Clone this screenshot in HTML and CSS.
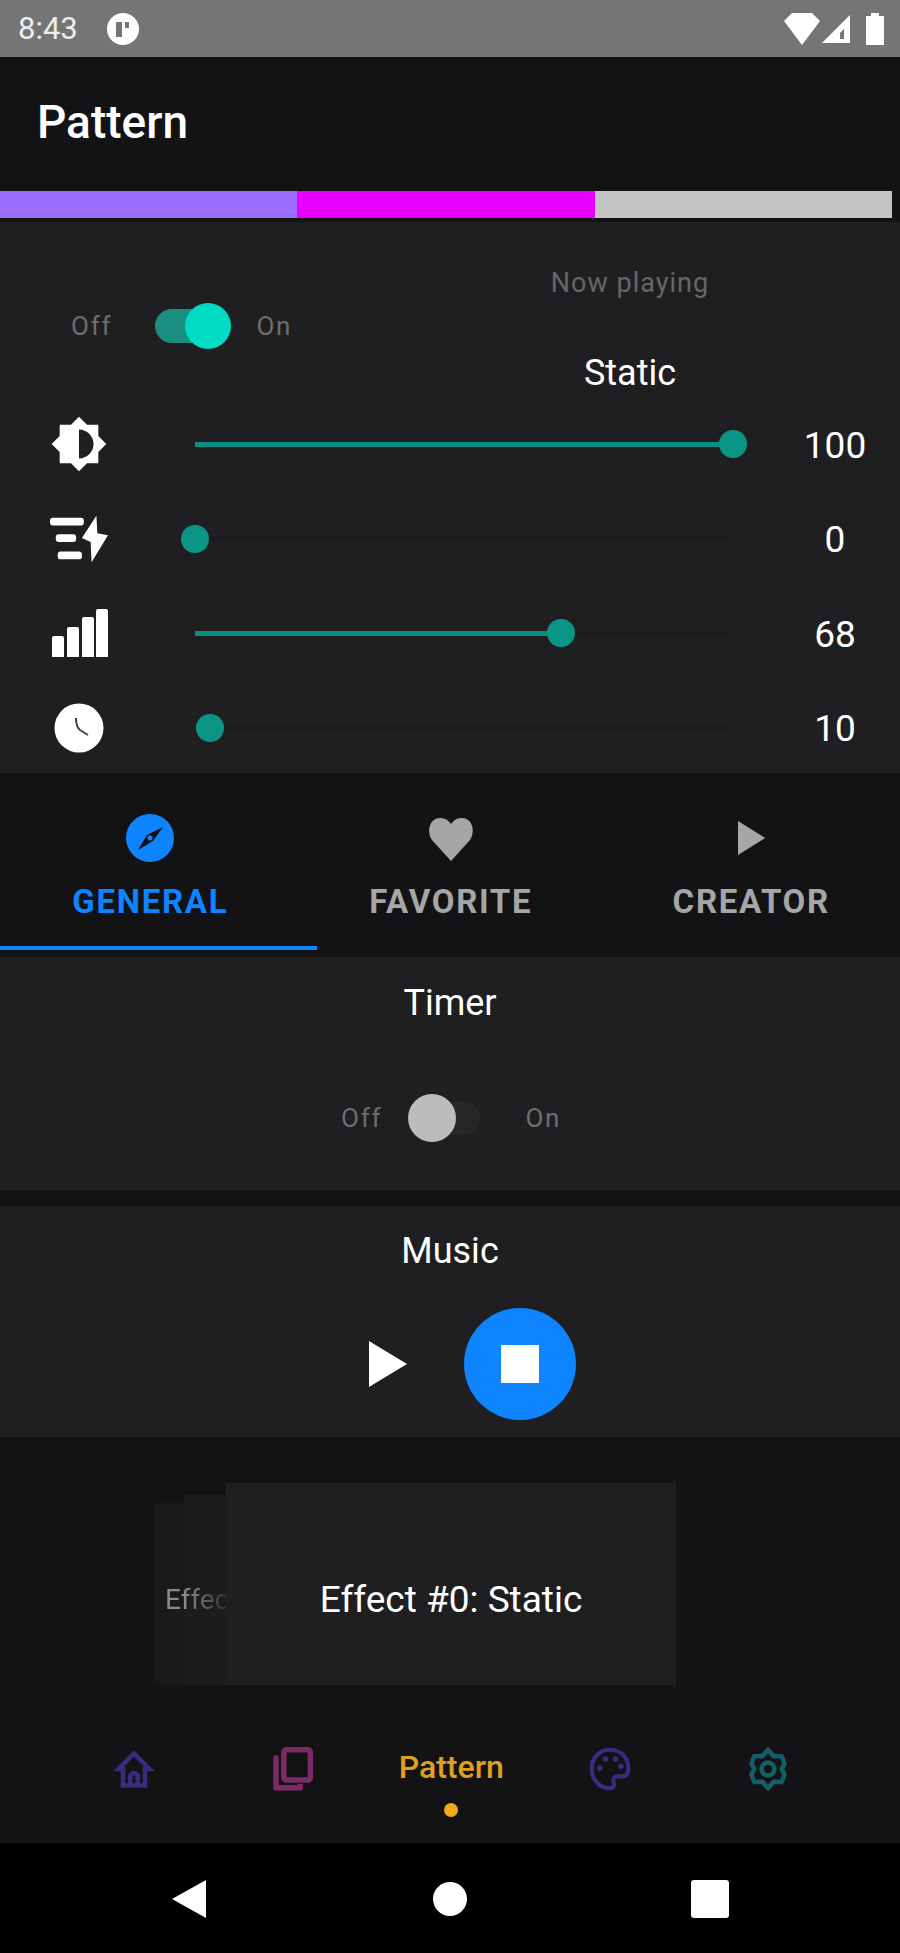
FILE: index.html
```html
<!DOCTYPE html>
<html lang="en">
<head>
  <meta charset="UTF-8">
  <meta name="viewport" content="width=device-width, initial-scale=1.0">
  <title>Pattern</title>
  <link rel="stylesheet" href="styles.css">
</head>
<body>
  <div class="status-bar">
    <span class="status-time">8:43</span>
    <svg class="status-app" viewBox="0 0 34 34"><circle cx="17" cy="17" r="16" fill="#fff"/><path d="M10 10h6v15h-6zM19 10h4v6h-4z" fill="#757575"/></svg>
    <span class="status-space"></span>
    <svg class="status-wifi" viewBox="0 0 36 32"><path d="M0 8 8 0h20l8 8-18 24z" fill="#fff"/></svg>
    <svg class="status-signal" viewBox="0 0 28 28"><path d="M0 28 28 0v28zM18 24h4V14l-4 4z" fill="#fff" fill-rule="evenodd"/></svg>
    <svg class="status-battery" viewBox="0 0 18 32"><path d="M5 0h8v3h5v29H0V3h5z" fill="#fff"/></svg>
  </div>

  <div class="app-bar">
    <h1>Pattern</h1>
  </div>

  <div class="color-bar">
    <div class="color-seg seg-purple"></div>
    <div class="color-seg seg-magenta"></div>
    <div class="color-seg seg-grey"></div>
  </div>

  <div class="panel controls">
    <div class="controls-top">
      <div class="toggle-group main-toggle">
        <span class="toggle-label">Off</span>
        <div class="switch switch-on"><div class="switch-thumb"></div></div>
        <span class="toggle-label">On</span>
      </div>
      <div class="now-playing">
        <div class="now-label">Now playing</div>
        <div class="now-name">Static</div>
      </div>
    </div>

    <div class="slider-row">
      <svg class="row-icon" viewBox="0 0 24 24"><path d="M20 15.31 23.31 12 20 8.69V4h-4.69L12 .69 8.69 4H4v4.69L.69 12 4 15.31V20h4.69L12 23.31 15.31 20H20v-4.69zM12 18V6c3.31 0 6 2.69 6 6s-2.69 6-6 6z" fill="#fff"/></svg>
      <div class="slider">
        <div class="slider-fill" style="width: 100%"></div>
        <div class="slider-thumb" style="left: 100%"></div>
      </div>
      <span class="slider-value">100</span>
    </div>

    <div class="slider-row">
      <svg class="row-icon" viewBox="0 0 60 48"><rect x="0" y="2" width="35" height="8" rx="3" fill="#fff"/><rect x="6" y="19" width="21" height="8" rx="3" fill="#fff"/><rect x="8" y="37" width="25" height="8" rx="3" fill="#fff"/><path d="M48 0 33 23l9 4 1 21 17-28-11-2z" fill="#fff"/></svg>
      <div class="slider">
        <div class="slider-thumb" style="left: 0%"></div>
      </div>
      <span class="slider-value">0</span>
    </div>

    <div class="slider-row">
      <svg class="row-icon" viewBox="0 0 58 48"><path d="M2 29q0-2 2-2h8q2 0 2 2v19H2zM17 20q0-2 2-2h8q2 0 2 2v28H17zM32 10q0-2 2-2h8q2 0 2 2v38H32zM46 2q0-2 2-2h8q2 0 2 2v46H46z" fill="#fff"/></svg>
      <div class="slider">
        <div class="slider-fill" style="width: 68%"></div>
        <div class="slider-thumb" style="left: 68%"></div>
      </div>
      <span class="slider-value">68</span>
    </div>

    <div class="slider-row">
      <svg class="row-icon" viewBox="0 0 58 58"><circle cx="29" cy="29" r="24.500" fill="#fff"/><path d="M26 19q0 9 4 12l8 5" fill="none" stroke="#444" stroke-width="2"/></svg>
      <div class="slider">
        <div class="slider-thumb" style="left: 2.800%"></div>
      </div>
      <span class="slider-value">10</span>
    </div>
  </div>

  <div class="tabs">
    <div class="tab tab-active">
      <svg class="tab-icon" viewBox="0 0 50 50"><circle cx="25" cy="25" r="24" fill="#0f84ff"/><path d="M38 14 28 28 13 37l9-15z" fill="#131316"/><circle cx="25" cy="25" r="2.500" fill="#0f84ff"/></svg>
      <span class="tab-label">GENERAL</span>
    </div>
    <div class="tab">
      <svg class="tab-icon" viewBox="0 0 50 50"><path d="M25 48 6 27C0 18 4 5 14 5c5 0 8 2 11 6 3-4 6-6 11-6 10 0 14 13 8 22z" fill="#a6a6a6"/></svg>
      <span class="tab-label">FAVORITE</span>
    </div>
    <div class="tab">
      <svg class="tab-icon" viewBox="0 0 50 50"><path d="M12 8v34l27-17z" fill="#a6a6a6"/></svg>
      <span class="tab-label">CREATOR</span>
    </div>
  </div>

  <div class="panel timer">
    <div class="panel-title">Timer</div>
    <div class="toggle-group timer-toggle">
      <span class="toggle-label">Off</span>
      <div class="switch switch-off"><div class="switch-thumb"></div></div>
      <span class="toggle-label">On</span>
    </div>
  </div>

  <div class="panel music">
    <div class="panel-title">Music</div>
    <div class="music-buttons">
      <svg class="play-icon" viewBox="0 0 40 48"><path d="M1 1v46l38-23z" fill="#fff"/></svg>
      <div class="stop-button"><div class="stop-square"></div></div>
    </div>
  </div>

  <div class="carousel">
    <div class="card card-back-2"></div>
    <div class="card card-back-1"></div>
    <span class="card-peek">Effec</span>
    <div class="card card-front">Effect #0: Static</div>
  </div>

  <div class="bottom-nav">
    <svg class="nav-icon" viewBox="0 0 44 48"><path d="M5 24 22 7l17 17h-5v18H10V24zM18 42V31q4-5 8 0v11" fill="none" stroke="#3a2a80" stroke-width="5"/></svg>
    <svg class="nav-icon" viewBox="0 0 44 48"><path d="M6 12H3.500v32.500H30V40" fill="none" stroke="#7a2b66" stroke-width="6" stroke-linejoin="round"/><rect x="12" y="3" width="29" height="33" rx="3" fill="none" stroke="#7a2b66" stroke-width="6"/></svg>
    <div class="nav-current">
      <span class="nav-label">Pattern</span>
      <span class="nav-dot"></span>
    </div>
    <svg class="nav-icon" viewBox="0 0 44 48"><path d="M22 3C10 3 2 12 2 24c0 12 9 21 20 21 4 0 5-3 4-6-1-4 0-7 5-7h5c5 0 6-4 6-9C42 11 33 3 22 3z" fill="none" stroke="#3a2a80" stroke-width="4.500"/><circle cx="11" cy="23" r="3" fill="#3a2a80"/><circle cx="17" cy="13" r="3" fill="#3a2a80"/><circle cx="28" cy="13" r="3" fill="#3a2a80"/><circle cx="34" cy="21" r="3" fill="#3a2a80"/></svg>
    <svg class="nav-icon" viewBox="0 0 44 48"><path d="M22 3l6 7 9 0 3 8-3 6 3 6-3 8-9 0-6 7-6-7-9 0-3-8 3-6-3-6 3-8 9 0z" fill="none" stroke="#145f66" stroke-width="5" stroke-linejoin="round"/><circle cx="22" cy="24" r="7" fill="none" stroke="#145f66" stroke-width="5"/></svg>
  </div>

  <div class="system-nav">
    <svg class="sys-back" viewBox="0 0 34 38"><path d="M34 0v38L0 19z" fill="#fff"/></svg>
    <div class="sys-home"></div>
    <div class="sys-recent"></div>
  </div>
</body>
</html>
```

FILE: styles.css
```css
body {
  margin: 0;
  width: 900px;
  height: 1953px;
  overflow: hidden;
  background-color: #131316;
  color: #fff;
  font-family: Roboto, "Liberation Sans", sans-serif;
}

/* status bar */
.status-bar {
  height: 57px;
  padding: 0 16px 0 18px;
  box-sizing: border-box;
  display: flex;
  align-items: center;
  background-color: #757575;
}

.status-time {
  font-size: 31px;
  color: #eee;
  width: 88px;
}

.status-app {
  width: 34px;
  height: 34px;
}

.status-space {
  flex: 1;
}

.status-wifi {
  width: 36px;
  height: 32px;
}

.status-signal {
  width: 28px;
  height: 28px;
  margin-left: 2px;
}

.status-battery {
  width: 18px;
  height: 32px;
  margin-left: 16px;
}

/* title and colours */
.app-bar {
  height: 134px;
  padding-left: 37px;
  display: flex;
  align-items: flex-start;
}

h1 {
  margin: 41px 0 0;
  font-size: 46px;
  line-height: 48px;
  font-weight: 500;
}

.color-bar {
  height: 27px;
  width: 892px;
  display: flex;
}

.color-seg {
  flex: 1;
}

.seg-purple {
  background-color: #996eff;
}

.seg-magenta {
  background-color: #e600ff;
}

.seg-grey {
  background-color: #c4c4c4;
}

.panel {
  background-color: #1f1f22;
}

/* top controls */
.controls {
  margin-top: 4px;
  height: 551px;
  overflow: hidden;
}

.controls-top {
  height: 175px;
  position: relative;
}

.toggle-group {
  display: flex;
  align-items: center;
}

.toggle-label {
  font-size: 26px;
  letter-spacing: 1.800px;
  color: #6e6e6e;
}

.main-toggle {
  padding-top: 87px;
  padding-left: 71px;
}

.switch {
  height: 34px;
  border-radius: 17px;
  position: relative;
}

.switch-thumb {
  border-radius: 50%;
  position: absolute;
}

.switch-on {
  width: 70px;
  margin: 0 31px 0 43px;
  background-color: #1a8f80;
}

.switch-on .switch-thumb {
  right: -6px;
  top: -6px;
  width: 46px;
  height: 46px;
  background-color: #00dcc4;
}

.switch-off {
  width: 68px;
  margin: 0 45px 0 30px;
  background-color: #262628;
}

.switch-off .switch-thumb {
  left: -4px;
  top: -7px;
  width: 48px;
  height: 48px;
  background-color: #bcbcbc;
}

.now-playing {
  position: absolute;
  left: 450px;
  width: 360px;
  top: 40px;
  text-align: center;
}

.now-label {
  font-size: 27px;
  letter-spacing: 1px;
  line-height: 42px;
  color: #666;
}

.now-name {
  margin-top: 47px;
  font-size: 36px;
  line-height: 44px;
}

/* sliders */
.slider-row {
  height: 94.5px;
  display: grid;
  grid-template-columns: 50px 58px 87px 538px 1fr;
  align-items: center;
}

.row-icon {
  grid-column: 2;
  width: 58px;
  height: 58px;
}

.slider {
  grid-column: 4;
  height: 5px;
  position: relative;
  background-color: #1c1c1e;
}

.slider-fill {
  height: 100%;
  background-color: #0a8f80;
}

.slider-thumb {
  width: 28px;
  height: 28px;
  margin-left: -14px;
  margin-top: -14px;
  border-radius: 50%;
  position: absolute;
  top: 50%;
  background-color: #0a9585;
}

.slider-value {
  grid-column: 5;
  text-align: center;
  font-size: 37px;
  padding-left: 37px;
  padding-top: 2px;
}

/* tabs */
.tabs {
  height: 184px;
  display: flex;
}

.tab {
  flex: 0 0 300.500px;
  display: flex;
  flex-direction: column;
  align-items: center;
  padding-top: 40px;
  box-sizing: border-box;
  color: #a6a6a6;
}

.tab-active {
  color: #0f84ff;
  position: relative;
}

.tab-active::after {
  content: "";
  position: absolute;
  left: 0;
  bottom: 7px;
  width: 317px;
  height: 4px;
  background-color: #0f84ff;
}

.tab-icon {
  width: 50px;
  height: 50px;
}

.tab-label {
  margin-top: 19px;
  font-size: 33px;
  line-height: 40px;
  font-weight: 700;
  letter-spacing: 1.700px;
}

/* timer and music */
.panel-title {
  text-align: center;
  font-size: 36px;
  line-height: 44px;
}

.timer {
  height: 233px;
  padding-top: 24px;
  box-sizing: border-box;
}

.timer-toggle {
  margin-top: 76px;
  padding-left: 341px;
}

.music {
  margin-top: 16px;
  height: 231px;
  padding-top: 23px;
  box-sizing: border-box;
}

.music-buttons {
  margin-top: 35px;
  padding-left: 368px;
  display: flex;
  align-items: center;
}

.play-icon {
  width: 40px;
  height: 48px;
}

.stop-button {
  width: 112px;
  height: 112px;
  margin-left: 56px;
  border-radius: 50%;
  background-color: #0f84ff;
  display: flex;
  align-items: center;
  justify-content: center;
}

.stop-square {
  width: 38px;
  height: 38px;
  background-color: #fff;
}

/* effect cards */
.carousel {
  height: 248px;
  position: relative;
}

.card {
  position: absolute;
  bottom: 0;
  box-sizing: border-box;
  white-space: nowrap;
}

.card-back-2 {
  left: 153px;
  width: 40px;
  height: 182px;
  background-color: #19191c;
}

.card-back-1 {
  left: 184px;
  width: 42px;
  height: 190px;
  background-color: #1c1c1f;
}

.card-peek {
  position: absolute;
  left: 165px;
  top: 145px;
  font-size: 28px;
  line-height: 36px;
  color: transparent;
  background: linear-gradient(to right, #8a8a8a 30%, #333 95%);
  -webkit-background-clip: text;
  background-clip: text;
}

.card-front {
  left: 226px;
  width: 450px;
  height: 202px;
  padding-top: 30px;
  font-size: 37px;
  display: flex;
  align-items: center;
  justify-content: center;
  background-color: #1f1f22;
}

/* bottom navigation */
.bottom-nav {
  height: 158px;
  padding-left: 55px;
  display: grid;
  grid-template-columns: repeat(5, 158.500px);
  justify-items: center;
  align-items: start;
}

.nav-icon {
  height: 44px;
  width: 42px;
  margin-top: 62px;
}

.nav-current {
  display: flex;
  flex-direction: column;
  align-items: center;
  padding-top: 62px;
}

.nav-label {
  font-size: 32px;
  line-height: 40px;
  font-weight: 500;
  color: #e0a020;
}

.nav-dot {
  width: 14px;
  height: 14px;
  margin-top: 16px;
  border-radius: 50%;
  background-color: #f0a81e;
}

/* android nav */
.system-nav {
  height: 110px;
  background-color: #000;
  display: flex;
  align-items: flex-start;
  padding-top: 37px;
  padding-left: 172px;
  box-sizing: border-box;
}

.sys-back {
  width: 34px;
  height: 38px;
}

.sys-home {
  width: 34px;
  height: 34px;
  margin: 2px 0 0 227px;
  border-radius: 50%;
  background-color: #fff;
}

.sys-recent {
  width: 38px;
  height: 38px;
  margin-left: 224px;
  border-radius: 3px;
  background-color: #fff;
}
```
